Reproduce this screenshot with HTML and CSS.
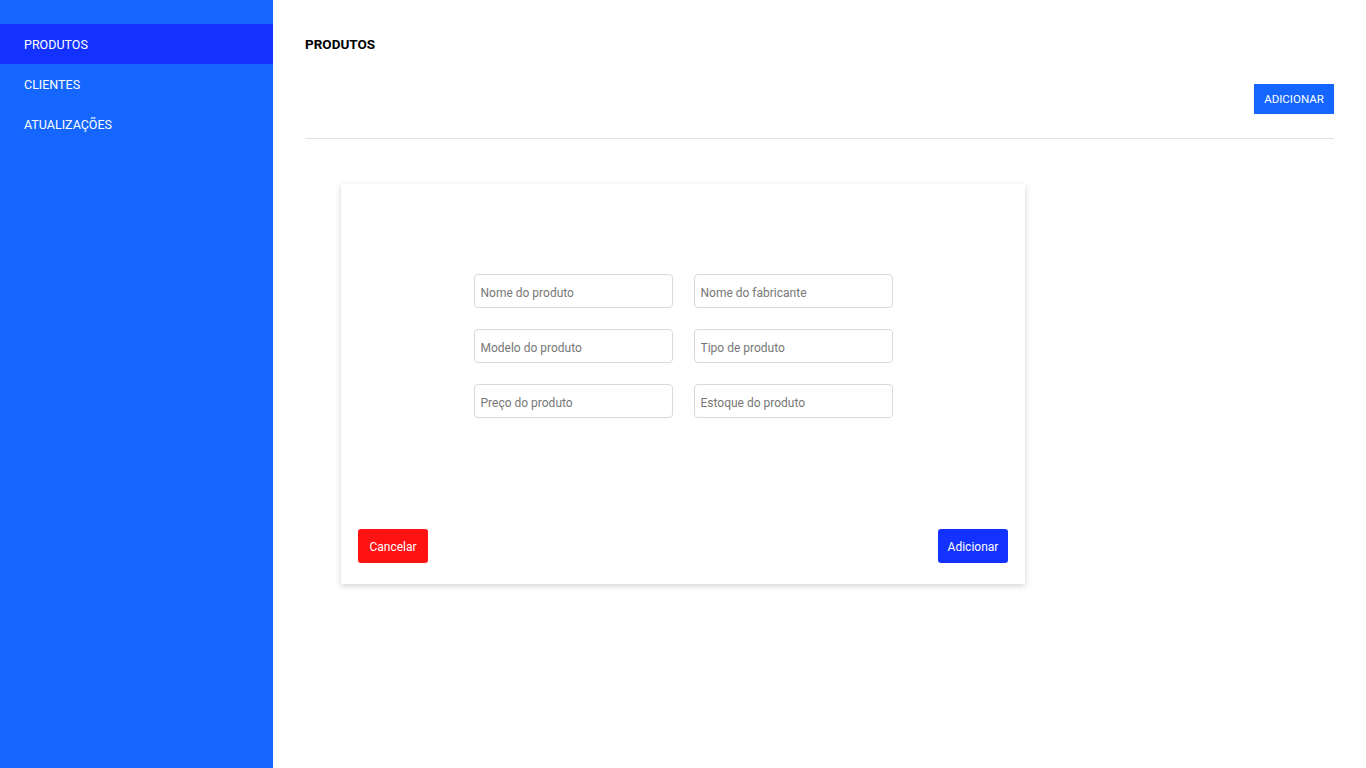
FILE: index.html
```html
<!DOCTYPE html>
<html lang="pt-BR">
<head>
  <meta charset="UTF-8" />
  <meta name="viewport" content="width=device-width, initial-scale=1.0"/>
  <title>Produtos</title>
  <link rel="stylesheet" href="styles.css">
</head>
<body>
  <div class="app">
    <nav class="sidebar">
      <a class="nav-item active" href="#">PRODUTOS</a>
      <a class="nav-item" href="#">CLIENTES</a>
      <a class="nav-item" href="#">ATUALIZAÇÕES</a>
    </nav>

    <main class="content">
      <h1 class="title">PRODUTOS</h1>
      <div class="toolbar">
        <button class="btn-top">ADICIONAR</button>
      </div>
      <hr class="divider">

      <div class="card">
        <form class="form">
          <input type="text" placeholder="Nome do produto">
          <input type="text" placeholder="Nome do fabricante">
          <input type="text" placeholder="Modelo do produto">
          <input type="text" placeholder="Tipo de produto">
          <input type="text" placeholder="Preço do produto">
          <input type="text" placeholder="Estoque do produto">
        </form>
        <div class="actions">
          <button class="btn cancel">Cancelar</button>
          <button class="btn add">Adicionar</button>
        </div>
      </div>
    </main>
  </div>
</body>
</html>
```

FILE: styles.css
```css
* {
  box-sizing: border-box;
}
body {
  margin: 0;
  font-family: Roboto, "Noto Sans", sans-serif;
  background: #ffffff;
}
.app {
  display: flex;
  height: 100vh;
}
.sidebar {
  width: 273px;
  background: #1566ff;
  padding-top: 24px;
  display: flex;
  flex-direction: column;
}
.nav-item {
  height: 40px;
  line-height: 42px;
  padding-left: 24px;
  color: #ffffff;
  font-size: 12.5px;
  text-decoration: none;
}
.nav-item.active {
  background: #1432ff;
}
.content {
  flex: 1;
  padding: 0 32px 0 32px;
}
.title {
  margin: 0;
  padding-top: 36px;
  height: 56px;
  font-size: 13.5px;
  font-weight: bold;
  color: #000000;
}
.toolbar {
  display: flex;
  justify-content: flex-end;
  margin-top: 28px;
}
.btn-top {
  width: 80px;
  height: 30px;
  border: none;
  background: #1566ff;
  color: #ffffff;
  font-family: inherit;
  font-size: 11.5px;
  padding: 0;
}
.divider {
  margin: 24px 0 0 0;
  border: none;
  border-top: 1px solid #e2e2e2;
}
.card {
  width: 684px;
  height: 400px;
  margin: 45px 0 0 36px;
  background: #ffffff;
  box-shadow: 0 2px 6px rgba(0, 0, 0, 0.18);
  display: flex;
  flex-direction: column;
  justify-content: space-between;
  padding: 90px 17px 21px 17px;
}
.form {
  display: grid;
  grid-template-columns: 199px 199px;
  gap: 21px;
  justify-content: center;
}
.form input {
  height: 34px;
  border: 1px solid #d9d9d9;
  border-radius: 4px;
  padding: 3px 6px 0 6px;
  font-family: inherit;
  font-size: 12px;
  color: #333;
  outline: none;
}
.form input::placeholder {
  color: #777777;
}
.actions {
  display: flex;
  justify-content: space-between;
}
.btn {
  width: 70px;
  height: 34px;
  border: none;
  border-radius: 3px;
  color: #ffffff;
  font-family: inherit;
  font-size: 12px;
  padding: 1px 0 0 0;
}
.btn.cancel {
  background: #ff1212;
}
.btn.add {
  background: #1432ff;
}
```
